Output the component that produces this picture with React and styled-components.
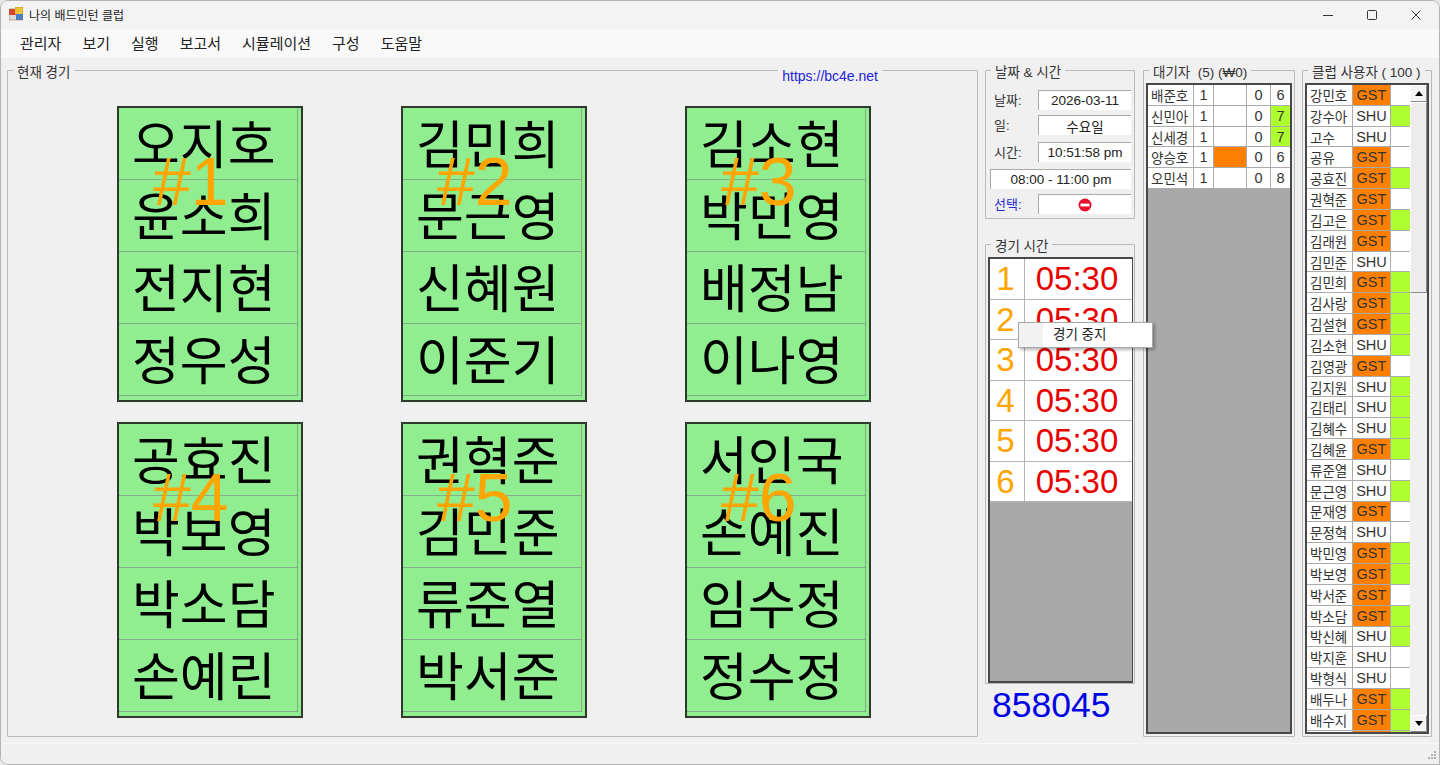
import React from "react";
import styled, { createGlobalStyle } from "styled-components";

const Global = createGlobalStyle`
  html, body { margin: 0; padding: 0; background: #e9e9e9; }
  * { box-sizing: border-box; }
  body { font-family: "Liberation Sans", "Noto Sans CJK KR", sans-serif; color: #222; overflow: hidden; }
`;

const Win = styled.div`
  width: 1440px; height: 765px; display: flex; flex-direction: column;
  background: #f0f0f0; border: 1px solid #b4b4b4; border-radius: 8px 8px 0 8px; overflow: hidden;
`;
const TitleBar = styled.header`
  height: 28px; flex: none; display: flex; align-items: center; padding: 0 1px 2px 8px;
  background: #f3f3f3; font-size: 12px; gap: 6px; color: #222;
`;
const TitleText = styled.span`flex: 1;`;
const WinButtons = styled.div`display: flex; align-items: center; align-self: flex-start;`;
const WinButton = styled.div`
  width: 44px; height: 28px; display: flex; align-items: center; justify-content: center;
`;
const MenuBar = styled.nav`
  height: 29px; flex: none; display: flex; align-items: center; gap: 21px; padding: 0 0 3px 19px;
  background: #f9f9f9; font-size: 15px; color: #222;
`;
const Main = styled.main`
  flex: 1; min-height: 0; display: flex; gap: 7px; padding: 4px 7px 6px 6px;
`;
const Group = styled.fieldset`
  position: relative; margin: 0; min-width: 0; border: 1px solid #b9b9b9; border-radius: 1px;
  padding: 0;
  width: ${(p) => p.$w || "auto"};
  flex: ${(p) => (p.$w ? "none" : "1")};
  height: ${(p) => p.$h || "auto"};
  margin-top: ${(p) => p.$top || "0"};
`;
const Legend = styled.legend`
  margin-left: 5px; padding: 4px 4px 0; font-size: 13.5px; line-height: 13px; color: #333; white-space: pre;
`;
const SiteLink = styled.span`
  position: absolute; top: -11px; right: 95px; padding: 0 4px; background: #f0f0f0;
  font-size: 14px; line-height: 16px; color: #2222dd;
`;
const CourtGrid = styled.div`
  display: grid; grid-template-columns: repeat(3, 186px); column-gap: 98px; row-gap: 20px;
  padding: 27px 0 0 109px;
`;
const Court = styled.section`
  position: relative; height: 296px; border: 2px solid #2f3a2f; background: #90ee90;
  padding: 0 3px 3px 0;
`;
const CourtRow = styled.div`
  height: 72px; display: flex; align-items: center; padding: 5px 0 0 13px;
  border-bottom: 1px solid #86ae86; border-right: 1px solid #86ae86;
  font-size: 52px; line-height: 1; color: #000; white-space: nowrap;
`;
const CourtNo = styled.span`
  position: absolute; left: 34px; top: 34px; font-size: 68px; line-height: 78px; color: #ffa500;
`;
const Column = styled.div`display: flex; flex-direction: column; width: 150px; flex: none; margin-right: 1px;`;
const DateGrid = styled.div`
  display: grid; grid-template-rows: 25px 27px 27px 25px 20px; padding: 11px 3px 0 4px;
`;
const FieldRow = styled.div`
  display: flex; align-items: flex-start; justify-content: space-between;
`;
const FieldLabel = styled.span`
  font-size: 13px; line-height: 21px; padding-left: 4px; color: ${(p) => (p.$blue ? "#2a2ad0" : "#333")};
`;
const Field = styled.div`
  width: ${(p) => p.$w || "93px"}; height: 20px; display: flex; align-items: center; justify-content: center;
  background: #fff; border-top: 1px solid #a9a9a9; border-left: 1px solid #a9a9a9;
  font-size: 13.5px; color: #222;
`;
const Board = styled.div`
  position: relative; margin: 4px 1px 0 2px; height: 426px; border: 2px solid #484848; background: #a9a9a9;
  border-right-width: 1px;
`;
const TimerRow = styled.div`
  height: 40.5px; display: grid; grid-template-columns: 35px 1fr; background: #fff;
  border-bottom: 1px solid #b4b4b4; font-size: 33px; line-height: 1;
`;
const TimerNo = styled.div`
  display: flex; align-items: center; justify-content: center; color: #ffa500; border-right: 1px solid #b4b4b4;
  padding-right: 3px;
`;
const TimerVal = styled.div`
  display: flex; align-items: center; justify-content: center; color: #e80000; padding-right: 3px;
`;
const ContextMenu = styled.div`
  position: absolute; left: 28px; top: 63px; width: 135px; height: 26px; z-index: 10;
  background: linear-gradient(90deg, #f2f2f2 0, #f2f2f2 24px, #fff 24px);
  border: 1px solid #a8a8a8; box-shadow: 2px 2px 3px rgba(0,0,0,.28);
  font-size: 13.5px; line-height: 23px; padding-left: 34px; color: #222;
`;
const Counter = styled.div`
  padding: 0 0 12px 7px; height: 53px; font-size: 35.5px; line-height: 40px; color: #0000e6;
  display: flex; align-items: center;
`;
const ListBox = styled.div`
  position: relative; margin: 4px 2px 0 2px; height: 651px; border: 2px solid #484848; background: #a9a9a9; overflow: hidden;
`;
const WaitRow = styled.div`
  display: grid; grid-template-columns: 46px 20px 33px 24px 20px; height: 20.83px;
`;
const UserRow = styled.div`
  display: grid; grid-template-columns: 46px 38px 20px; height: 20.83px;
`;
const Cell = styled.div`
  display: flex; align-items: center; overflow: hidden; white-space: nowrap;
  justify-content: ${(p) => (p.$name ? "flex-start" : "center")};
  padding-left: ${(p) => (p.$name ? "3px" : "0")};
  background: ${(p) => p.$bg || "#fff"};
  border-right: 1px solid #ababab; border-bottom: 1px solid #ababab;
  font-size: ${(p) => (p.$name ? "13.5px" : "14.5px")}; color: #333;
`;
const ScrollBar = styled.div`
  position: absolute; top: 0; right: 0; width: 17px; height: 100%; background: #f0f0f0;
  display: flex; flex-direction: column; justify-content: space-between;
`;
const ScrollBtn = styled.div`
  height: 17px; display: flex; align-items: center; justify-content: center; background: #f4f4f4;
  border: 1px solid #fff; border-right-color: #8a8a8a; border-bottom-color: #8a8a8a;
`;
const Thumb = styled.div`
  position: absolute; top: 17px; left: 0; width: 17px; height: 191px; background: #ececec;
  border: 1px solid #fff; border-right-color: #8a8a8a; border-bottom-color: #8a8a8a;
`;
const Status = styled.footer`
  height: 21px; flex: none; position: relative; background: #f0f0f0; border-top: 1px solid #f8f8f8;
`;
const Grip = styled.svg`position: absolute; right: 2px; bottom: 2px;`;

const courts = [
  ["오지호", "윤소희", "전지현", "정우성"],
  ["김민희", "문근영", "신혜원", "이준기"],
  ["김소현", "박민영", "배정남", "이나영"],
  ["공효진", "박보영", "박소담", "손예린"],
  ["권혁준", "김민준", "류준열", "박서준"],
  ["서인국", "손예진", "임수정", "정수정"],
];
const waiting = [
  ["배준호", "1", "", "0", "6"],
  ["신민아", "1", "", "0", "7"],
  ["신세경", "1", "", "0", "7"],
  ["양승호", "1", "o", "0", "6"],
  ["오민석", "1", "", "0", "8"],
];
const users = [
  ["강민호", "G", 0], ["강수아", "S", 1], ["고수", "S", 0], ["공유", "G", 0], ["공효진", "G", 1],
  ["권혁준", "G", 0], ["김고은", "G", 1], ["김래원", "G", 0], ["김민준", "S", 0], ["김민희", "G", 1],
  ["김사랑", "G", 1], ["김설현", "G", 1], ["김소현", "S", 1], ["김영광", "G", 0], ["김지원", "S", 1],
  ["김태리", "S", 1], ["김혜수", "S", 1], ["김혜윤", "G", 1], ["류준열", "S", 0], ["문근영", "S", 1],
  ["문재영", "G", 0], ["문정혁", "S", 0], ["박민영", "G", 1], ["박보영", "G", 1], ["박서준", "G", 0],
  ["박소담", "G", 1], ["박신혜", "S", 1], ["박지훈", "S", 0], ["박형식", "S", 0], ["배두나", "G", 1],
  ["배수지", "G", 1], ["", "G", 1],
];
const ORANGE = "#ff8000";
const GREEN = "#adff2f";

const AppIcon = () => (
  <svg width="14" height="14" viewBox="0 0 14 14">
    <rect x="0" y="2" width="7" height="6" fill="#d8432e" />
    <rect x="6" y="0" width="8" height="7" fill="#f1c232" />
    <rect x="7" y="7" width="7" height="6" fill="#4a7fc9" />
    <rect x="0" y="8" width="7" height="5" fill="#d9d9d9" />
    <path d="M0 2h7M6 0h8v13H0V2" fill="none" stroke="#8a6d3b" strokeWidth=".5" />
  </svg>
);

export default function App() {
  return (
    <>
      <Global />
      <Win>
        <TitleBar>
          <AppIcon />
          <TitleText>나의 배드민턴 클럽</TitleText>
          <WinButtons>
            <WinButton>
              <svg width="12" height="12" viewBox="0 0 12 12"><path d="M1 6.5h10" stroke="#333" strokeWidth="1" /></svg>
            </WinButton>
            <WinButton>
              <svg width="12" height="12" viewBox="0 0 12 12"><rect x="1.5" y="1.5" width="9" height="9" rx="1" fill="none" stroke="#333" strokeWidth="1" /></svg>
            </WinButton>
            <WinButton>
              <svg width="12" height="12" viewBox="0 0 12 12"><path d="M1.5 1.5l9 9M10.5 1.5l-9 9" stroke="#333" strokeWidth="1" /></svg>
            </WinButton>
          </WinButtons>
        </TitleBar>
        <MenuBar>
          {["관리자", "보기", "실행", "보고서", "시뮬레이션", "구성", "도움말"].map((m) => (
            <span key={m}>{m}</span>
          ))}
        </MenuBar>
        <Main>
          <Group>
            <Legend>현재 경기</Legend>
            <SiteLink>https://bc4e.net</SiteLink>
            <CourtGrid>
              {courts.map((names, i) => (
                <Court key={i}>
                  {names.map((n) => <CourtRow key={n}>{n}</CourtRow>)}
                  <CourtNo>#{i + 1}</CourtNo>
                </Court>
              ))}
            </CourtGrid>
          </Group>
          <Column>
            <Group $h="157px">
              <Legend>날짜 &amp; 시간</Legend>
              <DateGrid>
                <FieldRow><FieldLabel>날짜:</FieldLabel><Field>2026-03-11</Field></FieldRow>
                <FieldRow><FieldLabel>일:</FieldLabel><Field>수요일</Field></FieldRow>
                <FieldRow><FieldLabel>시간:</FieldLabel><Field>10:51:58 pm</Field></FieldRow>
                <FieldRow><Field $w="141px">08:00 - 11:00 pm</Field></FieldRow>
                <FieldRow>
                  <FieldLabel $blue>선택:</FieldLabel>
                  <Field>
                    <svg width="14" height="14" viewBox="0 0 14 14">
                      <circle cx="7" cy="7" r="6.5" fill="#e8112d" />
                      <rect x="2.5" y="5.6" width="9" height="2.8" fill="#fff" />
                    </svg>
                  </Field>
                </FieldRow>
              </DateGrid>
            </Group>
            <Group $h="448px" $top="17px">
              <Legend>경기 시간</Legend>
              <Board>
                {[1, 2, 3, 4, 5, 6].map((n) => (
                  <TimerRow key={n}>
                    <TimerNo>{n}</TimerNo>
                    <TimerVal>05:30</TimerVal>
                  </TimerRow>
                ))}
                <ContextMenu>경기 중지</ContextMenu>
              </Board>
            </Group>
            <Counter>858045</Counter>
          </Column>
          <Group $w="152px">
            <Legend>{"대기자  (5) (₩0)"}</Legend>
            <ListBox>
              {waiting.map((r) => (
                <WaitRow key={r[0]}>
                  <Cell $name>{r[0]}</Cell>
                  <Cell>{r[1]}</Cell>
                  <Cell $bg={r[2] ? ORANGE : undefined} />
                  <Cell>{r[3]}</Cell>
                  <Cell $bg={r[4] === "7" ? GREEN : undefined}>{r[4]}</Cell>
                </WaitRow>
              ))}
            </ListBox>
          </Group>
          <Group $w="130px">
            <Legend>클럽 사용자 ( 100 )</Legend>
            <ListBox>
              {users.map((u, i) => (
                <UserRow key={i}>
                  <Cell $name>{u[0]}</Cell>
                  <Cell $bg={u[1] === "G" ? ORANGE : undefined}>{u[0] ? (u[1] === "G" ? "GST" : "SHU") : ""}</Cell>
                  <Cell $bg={u[2] ? GREEN : undefined} />
                </UserRow>
              ))}
              <ScrollBar>
                <ScrollBtn>
                  <svg width="8" height="5" viewBox="0 0 8 5"><path d="M4 0l4 5H0z" fill="#000" /></svg>
                </ScrollBtn>
                <Thumb />
                <ScrollBtn>
                  <svg width="8" height="5" viewBox="0 0 8 5"><path d="M0 0h8L4 5z" fill="#000" /></svg>
                </ScrollBtn>
              </ScrollBar>
            </ListBox>
          </Group>
        </Main>
        <Status>
          <Grip width="12" height="12" viewBox="0 0 12 12" fill="#b0b0b0">
            <rect x="9" y="1" width="2" height="2" /><rect x="6" y="4" width="2" height="2" /><rect x="9" y="4" width="2" height="2" />
            <rect x="3" y="7" width="2" height="2" /><rect x="6" y="7" width="2" height="2" /><rect x="9" y="7" width="2" height="2" />
          </Grip>
        </Status>
      </Win>
    </>
  );
}
